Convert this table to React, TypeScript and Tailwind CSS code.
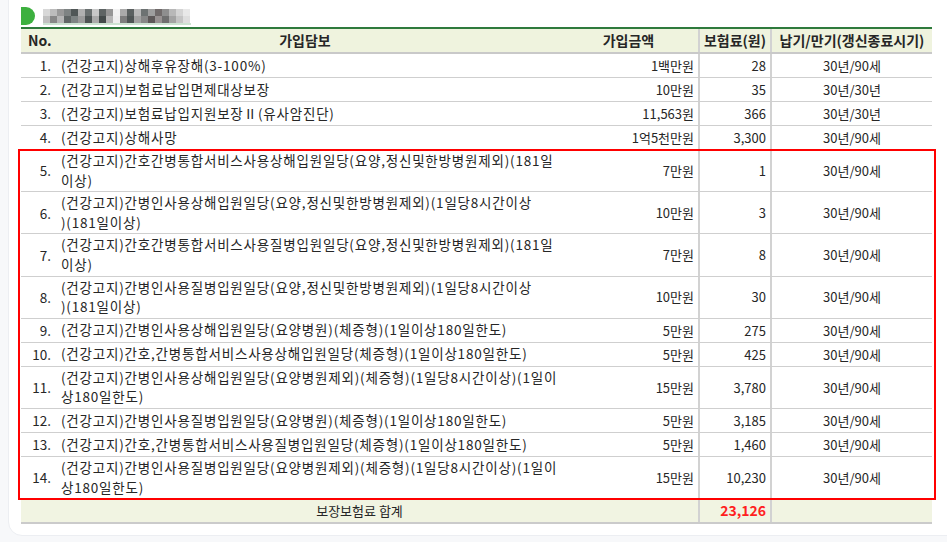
import React from "react";

type Row = { no: string; lines: string[]; amount: string; premium: string; term: string };

const rows: Row[] = [
  { no: "1.", lines: ["(건강고지)상해후유장해(3-100%)"], amount: "1백만원", premium: "28", term: "30년/90세" },
  { no: "2.", lines: ["(건강고지)보험료납입면제대상보장"], amount: "10만원", premium: "35", term: "30년/30년" },
  { no: "3.", lines: ["(건강고지)보험료납입지원보장Ⅱ(유사암진단)"], amount: "11,563원", premium: "366", term: "30년/30년" },
  { no: "4.", lines: ["(건강고지)상해사망"], amount: "1억5천만원", premium: "3,300", term: "30년/90세" },
  { no: "5.", lines: ["(건강고지)간호간병통합서비스사용상해입원일당(요양,정신및한방병원제외)(181일", "이상)"], amount: "7만원", premium: "1", term: "30년/90세" },
  { no: "6.", lines: ["(건강고지)간병인사용상해입원일당(요양,정신및한방병원제외)(1일당8시간이상", ")(181일이상)"], amount: "10만원", premium: "3", term: "30년/90세" },
  { no: "7.", lines: ["(건강고지)간호간병통합서비스사용질병입원일당(요양,정신및한방병원제외)(181일", "이상)"], amount: "7만원", premium: "8", term: "30년/90세" },
  { no: "8.", lines: ["(건강고지)간병인사용질병입원일당(요양,정신및한방병원제외)(1일당8시간이상", ")(181일이상)"], amount: "10만원", premium: "30", term: "30년/90세" },
  { no: "9.", lines: ["(건강고지)간병인사용상해입원일당(요양병원)(체증형)(1일이상180일한도)"], amount: "5만원", premium: "275", term: "30년/90세" },
  { no: "10.", lines: ["(건강고지)간호,간병통합서비스사용상해입원일당(체증형)(1일이상180일한도)"], amount: "5만원", premium: "425", term: "30년/90세" },
  { no: "11.", lines: ["(건강고지)간병인사용상해입원일당(요양병원제외)(체증형)(1일당8시간이상)(1일이", "상180일한도)"], amount: "15만원", premium: "3,780", term: "30년/90세" },
  { no: "12.", lines: ["(건강고지)간병인사용질병입원일당(요양병원)(체증형)(1일이상180일한도)"], amount: "5만원", premium: "3,185", term: "30년/90세" },
  { no: "13.", lines: ["(건강고지)간호,간병통합서비스사용질병입원일당(체증형)(1일이상180일한도)"], amount: "5만원", premium: "1,460", term: "30년/90세" },
  { no: "14.", lines: ["(건강고지)간병인사용질병입원일당(요양병원제외)(체증형)(1일당8시간이상)(1일이", "상180일한도)"], amount: "15만원", premium: "10,230", term: "30년/90세" },
];

const mosaicTop = ["#d8d8d8", "#bcbcbc", "#999999", "#7e8383", "#505757", "#b0b0b0", "#6a7070", "#c8c8c8", "#5e6464", "#969696", "#f2f2f2", "#aaaaaa", "#5b6161", "#b9b9b9", "#6d7272", "#9e9e9e", "#706a6a", "#8e8e8e", "#b8b8b8", "#d4d4d4", "#e8e8e8"];
const mosaicBot = ["#c0c0c0", "#878787", "#b6b6b6", "#606666", "#7d8383", "#9b9b9b", "#4e5454", "#aaaaaa", "#434a4a", "#b6b6b6", "#eeeeee", "#7d7d7d", "#4f5555", "#a2a2a2", "#868686", "#5d5858", "#989292", "#6f6f6f", "#a3a3a3", "#c4c4c4", "#dedede"];

const grid = "grid grid-cols-[30px_508px_139px_72px_162px]";

function DataRow({ r }: { r: Row }) {
  return (
    <div className={`${grid} border-b border-[#cfcfcf]`}>
      <div className="flex items-center justify-end text-[13.5px]">{r.no}</div>
      <div className="flex flex-col justify-center min-h-[23px] pl-[10px] py-[1px] leading-[19.6px] text-[13.5px] tracking-[0.8px]">
        {r.lines.map((l, i) => (
          <div key={i} className="whitespace-nowrap">{l}</div>
        ))}
      </div>
      <div className="flex items-center justify-end pr-[4px]">{r.amount}</div>
      <div className="flex items-center justify-end pr-[4px] border-l-2 border-[#d2d2d2]">{r.premium}</div>
      <div className="flex items-center justify-center border-l-2 border-[#d2d2d2]">{r.term}</div>
    </div>
  );
}

export default function App() {
  return (
    <div
      className="w-[947px] h-[542px] overflow-hidden bg-[#f7f8fa] text-[13px] text-[#262626]"
      style={{ fontFamily: '"Malgun Gothic", "Noto Sans CJK KR", "Noto Sans", sans-serif' }}
    >
      <div className="ml-[8px] mr-[-20px] -mt-[2px] pt-[8px] pb-[11px] pl-[12px] bg-white border border-[#eceef2] rounded-bl-[14px]">
        {/* Title */}
        <div className="flex items-start h-[18px] mb-[2px]">
          <div className="w-[14px] h-[18px] bg-[#3db03f] rounded-r-full" />
          <div className="ml-[8px] mt-[2px] flex flex-col">
            <div className="flex blur-[0.5px]">
              {mosaicTop.map((c, i) => (
                <div key={i} className="w-[7px] h-[7px]" style={{ backgroundColor: c }} />
              ))}
            </div>
            <div className="flex blur-[0.5px]">
              {mosaicBot.map((c, i) => (
                <div key={i} className="w-[7px] h-[7px]" style={{ backgroundColor: c }} />
              ))}
            </div>
            <div className="w-[148px] h-[2px] bg-[#cde3d2]" />
          </div>
        </div>

        {/* Table */}
        <div className="w-[911px]">
          {/* Header */}
          <div className={`${grid} border-t-2 border-[#2e7a3c] border-b-2 border-b-[#c9c9c9] bg-[#eff3de] font-bold text-[14px] h-[27px]`}>
            <div className="flex items-center pl-[7px]">No.</div>
            <div className="flex items-center justify-center">가입담보</div>
            <div className="flex items-center justify-center">가입금액</div>
            <div className="flex items-center justify-center border-l-2 border-[#d2d2d2]">보험료(원)</div>
            <div className="flex items-center justify-center border-l-2 border-[#d2d2d2]">납기/만기(갱신종료시기)</div>
          </div>

          {rows.slice(0, 4).map((r) => (
            <DataRow key={r.no} r={r} />
          ))}

          <div className="relative">
            {rows.slice(4).map((r) => (
              <DataRow key={r.no} r={r} />
            ))}
            <div className="absolute left-[-3px] right-[-4px] top-[-1px] bottom-[-1px] border-2 border-[#ff0000] pointer-events-none" />
          </div>

          {/* Total */}
          <div className="grid grid-cols-[677px_72px_162px] bg-[#f1f4e2] border-b-2 border-[#cbcbcb] h-[25px]">
            <div className="flex items-center justify-center">보장보험료 합계</div>
            <div className="flex items-center justify-end pr-[4px] border-l-2 border-[#d2d2d2] font-bold text-[#ff1f1f] text-[14px]">23,126</div>
            <div className="border-l-2 border-[#d2d2d2]" />
          </div>
        </div>
      </div>
    </div>
  );
}
